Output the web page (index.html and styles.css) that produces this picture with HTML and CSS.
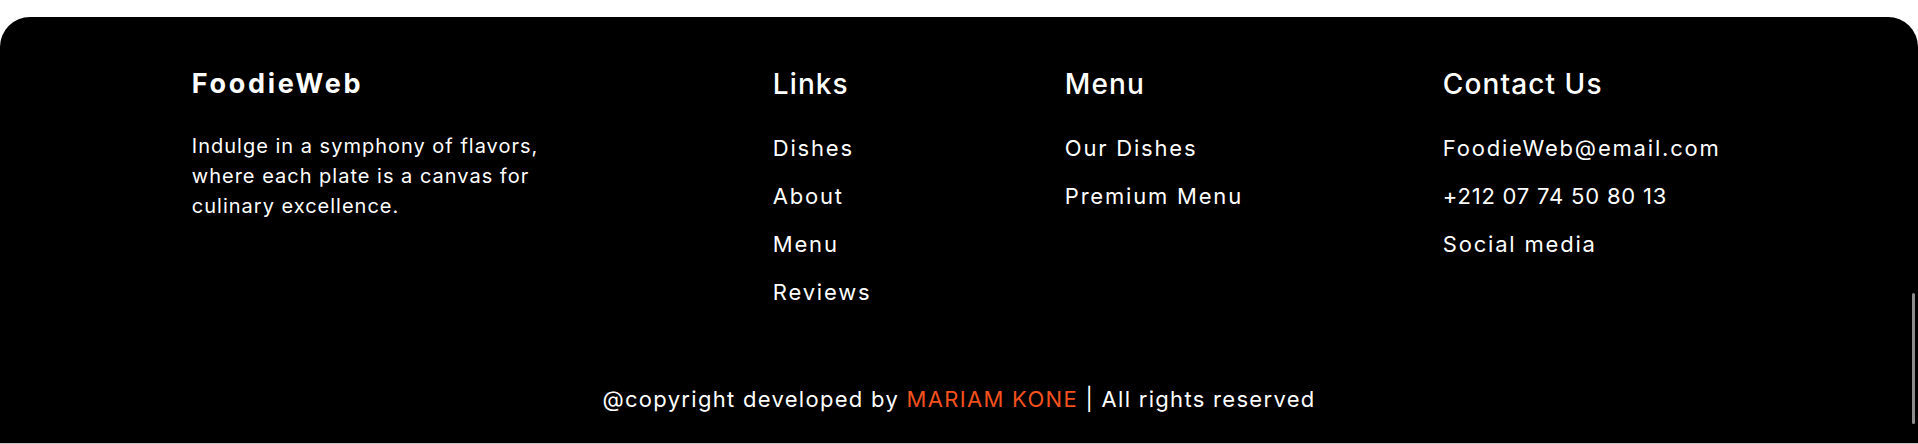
FILE: index.html
```html
<!DOCTYPE html>
<html lang="en">
<head>
<meta charset="utf-8">
<title>FoodieWeb Footer</title>
<link rel="stylesheet" href="styles.css">
</head>
<body>
<footer class="footer">
  <div class="footer-inner">
    <div class="col brand-col">
      <h2 class="brand">FoodieWeb</h2>
      <p class="brand-text">Indulge in a symphony of flavors, where each plate is a canvas for culinary excellence.</p>
    </div>
    <div class="col">
      <h3 class="col-title">Links</h3>
      <ul class="col-list">
        <li><a href="#">Dishes</a></li>
        <li><a href="#">About</a></li>
        <li><a href="#">Menu</a></li>
        <li><a href="#">Reviews</a></li>
      </ul>
    </div>
    <div class="col">
      <h3 class="col-title">Menu</h3>
      <ul class="col-list">
        <li><a href="#">Our Dishes</a></li>
        <li><a href="#">Premium Menu</a></li>
      </ul>
    </div>
    <div class="col">
      <h3 class="col-title">Contact Us</h3>
      <ul class="col-list">
        <li><a href="#">FoodieWeb@email.com</a></li>
        <li class="phone"><a href="#">+212 07 74 50 80 13</a></li>
        <li><a href="#">Social media</a></li>
      </ul>
    </div>
  </div>
  <p class="copyright">@copyright developed by <span class="author">MARIAM KONE</span> | All rights reserved</p>
</footer>
<div class="bottom-edge"></div>
<div class="scroll-thumb"></div>
</body>
</html>
```

FILE: styles.css
```css
* {
  box-sizing: border-box;
}

html, body {
  margin: 0;
  padding: 0;
  background: #ffffff;
  overflow: hidden;
}

body {
  font-family: Inter, "Noto Sans", sans-serif;
  color: #ffffff;
}

.footer {
  margin-top: 17px;
  height: 426px;
  background: #000000;
  border-radius: 30px 30px 0 0;
  padding-top: 51px;
}

.footer-inner {
  width: 80%;
  margin: 0 auto;
  display: grid;
  grid-template-columns: 581px 292px 378px 1fr;
}

.brand {
  margin: 0;
  font-size: 27px;
  line-height: 32px;
  font-weight: 700;
  letter-spacing: 2.7px;
}

.brand-text {
  margin: 31px 0 0 0;
  max-width: 370px;
  font-size: 20px;
  line-height: 30px;
  font-weight: 400;
  letter-spacing: 1px;
}

.col-title {
  margin: 0;
  font-size: 28px;
  line-height: 33.6px;
  font-weight: 500;
  letter-spacing: 1.1px;
}

.col-list {
  list-style: none;
  margin: 30px 0 0 0;
  padding: 0;
  display: flex;
  flex-direction: column;
  gap: 16px;
}

.col-list li {
  font-size: 22px;
  line-height: 32px;
  letter-spacing: 1.8px;
}

.col-list li.phone {
  letter-spacing: 0.8px;
}

.col-list a {
  color: #ffffff;
  text-decoration: none;
}

.copyright {
  margin: 75px 0 0 0;
  text-align: center;
  font-size: 22px;
  line-height: 33px;
  letter-spacing: 1.3px;
}

.author {
  color: #f4511e;
}

.bottom-edge {
  height: 1px;
  background: #c4c4c4;
}

.scroll-thumb {
  position: fixed;
  top: 293px;
  left: 1912px;
  width: 3px;
  height: 131px;
  background: #8c8c8c;
  border-radius: 2px;
}
```
